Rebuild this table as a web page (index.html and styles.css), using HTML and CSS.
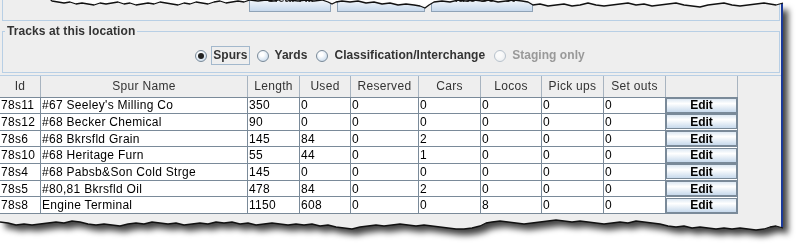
FILE: index.html
```html
<!DOCTYPE html>
<html lang="en">

<head>
    <meta charset="UTF-8">
    <title>Edit Location</title>
    <link rel="stylesheet" href="styles.css">
</head>

<body>
    <div class="shot">
        <div class="paper">
            <div class="frame">
                <div class="toolbar">
                    <button class="jbtn b1">Clear All</button>
                    <button class="jbtn b2">Set All</button>
                    <button class="jbtn b3">Auto Select</button>
                </div>

                <div class="tracks">
                    <div class="tracks-title">Tracks at this location</div>
                    <div class="radios">
                        <label class="opt"><span class="radio on"></span><span class="txt focus">Spurs</span></label>
                        <label class="opt"><span class="radio"></span><span class="txt">Yards</span></label>
                        <label class="opt"><span class="radio"></span><span class="txt">Classification/Interchange</span></label>
                        <label class="opt off"><span class="radio"></span><span class="txt">Staging only</span></label>
                    </div>
                </div>

                <div class="scroll">
                    <table class="grid">
                        <colgroup>
                            <col style="width:41px">
                            <col style="width:207px">
                            <col style="width:52px">
                            <col style="width:51px">
                            <col style="width:68px">
                            <col style="width:62px">
                            <col style="width:61px">
                            <col style="width:62px">
                            <col style="width:62px">
                            <col style="width:72px">
                        </colgroup>
                        <thead>
                            <tr>
                                <th>Id</th>
                                <th>Spur Name</th>
                                <th>Length</th>
                                <th>Used</th>
                                <th>Reserved</th>
                                <th>Cars</th>
                                <th>Locos</th>
                                <th>Pick ups</th>
                                <th>Set outs</th>
                                <th></th>
                            </tr>
                        </thead>
                        <tbody>
                            <tr>
                                <td>78s11</td><td>#67 Seeley's Milling Co</td><td>350</td><td>0</td><td>0</td><td>0</td><td>0</td><td>0</td><td>0</td>
                                <td class="act"><button class="edit">Edit</button></td>
                            </tr>
                            <tr>
                                <td>78s12</td><td>#68 Becker Chemical</td><td>90</td><td>0</td><td>0</td><td>0</td><td>0</td><td>0</td><td>0</td>
                                <td class="act"><button class="edit">Edit</button></td>
                            </tr>
                            <tr>
                                <td>78s6</td><td>#68 Bkrsfld Grain</td><td>145</td><td>84</td><td>0</td><td>2</td><td>0</td><td>0</td><td>0</td>
                                <td class="act"><button class="edit">Edit</button></td>
                            </tr>
                            <tr>
                                <td>78s10</td><td>#68 Heritage Furn</td><td>55</td><td>44</td><td>0</td><td>1</td><td>0</td><td>0</td><td>0</td>
                                <td class="act"><button class="edit">Edit</button></td>
                            </tr>
                            <tr>
                                <td>78s4</td><td>#68 Pabsb&amp;Son Cold Strge</td><td>145</td><td>0</td><td>0</td><td>0</td><td>0</td><td>0</td><td>0</td>
                                <td class="act"><button class="edit">Edit</button></td>
                            </tr>
                            <tr>
                                <td>78s5</td><td>#80,81 Bkrsfld Oil</td><td>478</td><td>84</td><td>0</td><td>2</td><td>0</td><td>0</td><td>0</td>
                                <td class="act"><button class="edit">Edit</button></td>
                            </tr>
                            <tr>
                                <td>78s8</td><td>Engine Terminal</td><td>1150</td><td>608</td><td>0</td><td>0</td><td>8</td><td>0</td><td>0</td>
                                <td class="act"><button class="edit">Edit</button></td>
                            </tr>
                        </tbody>
                    </table>
                </div>
            </div>
        </div>

        <!-- ink line along the torn edges -->
        <svg class="tear" width="800" height="248" viewBox="0 0 800 248">
            <polyline points="46,-10 49,-2 52,1 58,2 64,3 70,2 76,4 82,3 88,4 94,5 100,3 106,4 112,3 118,2 124,4 130,3 136,5 142,4 148,3 154,4 160,2 166,3 172,4 178,5 184,3 190,4 196,2 202,3 208,4 214,2 220,1 226,3 232,2 238,1 244,2 250,0 258,1 266,0 274,1 282,-1 290,0 298,1 306,0 314,1 322,0 328,2 332,4 336,2 342,1 350,2 358,1 366,3 374,2 382,4 390,3 398,5 406,4 414,5 420,6 425,8 429,5 434,2 442,1 450,2 458,0 466,1 474,0 482,1 490,0 498,2 506,1 514,0 522,1 528,2 533,5 540,4 548,6 556,5 564,4 572,6 580,5 588,3 596,5 604,6 612,5 620,4 628,3 636,5 644,4 652,6 660,5 668,4 676,3 684,5 692,6 700,7 708,5 716,4 724,3 732,5 740,6 748,5 756,4 764,3 770,4 776,5 783,3" />
            <polyline points="0,222 8,223 16,225 24,224 32,225 40,224 48,223 56,222 64,223 72,221 80,222 88,224 96,225 104,224 112,225 120,226 128,224 136,223 144,224 152,222 160,223 168,224 176,223 184,225 192,224 200,223 208,224 216,222 224,223 232,222 240,224 248,223 256,225 264,224 272,223 280,224 288,225 296,224 304,225 312,224 320,226 328,225 336,227 344,228 352,229 360,227 368,226 376,225 384,226 392,225 400,224 408,225 416,226 424,225 432,226 440,227 448,228 456,229 464,229 472,228 480,226 486,223 492,222 500,221 508,222 516,223 524,224 532,223 540,222 548,221 556,220 564,221 572,222 580,221 588,222 596,223 604,224 612,223 620,222 628,223 636,221 644,222 652,223 660,224 668,226 676,227 684,226 692,228 700,227 708,228 716,229 724,228 732,229 740,228 748,229 756,230 764,229 770,227 776,226 783,228" />
        </svg>
    </div>
</body>

</html>
```

FILE: styles.css
```css
* {
    box-sizing: border-box;
}

body {
    margin: 0;
    width: 800px;
    height: 248px;
    overflow: hidden;
    background: #fff;
    font-family: "Liberation Sans", Arial, sans-serif;
    font-size: 12px;
}

.shot {
    position: relative;
    width: 800px;
    height: 248px;
}

/* the window piece, cut out with torn top and bottom edges */
.paper {
    width: 800px;
    height: 248px;
    filter: drop-shadow(5px 6px 3px rgba(0, 0, 0, 0.75));
}

.frame {
    width: 783px;
    height: 248px;
    background: #eeeeee;
    border-right: 2px solid #1b3a9a;
    overflow: hidden;
    clip-path: polygon(0 -10px, 46px -10px, 49px -2px, 52px 1px, 58px 2px, 64px 3px, 70px 2px, 76px 4px, 82px 3px, 88px 4px, 94px 5px, 100px 3px, 106px 4px, 112px 3px, 118px 2px, 124px 4px, 130px 3px, 136px 5px, 142px 4px, 148px 3px, 154px 4px, 160px 2px, 166px 3px, 172px 4px, 178px 5px, 184px 3px, 190px 4px, 196px 2px, 202px 3px, 208px 4px, 214px 2px, 220px 1px, 226px 3px, 232px 2px, 238px 1px, 244px 2px, 250px 0, 258px 1px, 266px 0, 274px 1px, 282px -1px, 290px 0, 298px 1px, 306px 0, 314px 1px, 322px 0, 328px 2px, 332px 4px, 336px 2px, 342px 1px, 350px 2px, 358px 1px, 366px 3px, 374px 2px, 382px 4px, 390px 3px, 398px 5px, 406px 4px, 414px 5px, 420px 6px, 425px 8px, 429px 5px, 434px 2px, 442px 1px, 450px 2px, 458px 0, 466px 1px, 474px 0, 482px 1px, 490px 0, 498px 2px, 506px 1px, 514px 0, 522px 1px, 528px 2px, 533px 5px, 540px 4px, 548px 6px, 556px 5px, 564px 4px, 572px 6px, 580px 5px, 588px 3px, 596px 5px, 604px 6px, 612px 5px, 620px 4px, 628px 3px, 636px 5px, 644px 4px, 652px 6px, 660px 5px, 668px 4px, 676px 3px, 684px 5px, 692px 6px, 700px 7px, 708px 5px, 716px 4px, 724px 3px, 732px 5px, 740px 6px, 748px 5px, 756px 4px, 764px 3px, 770px 4px, 776px 5px, 783px 3px,
            783px 228px, 776px 226px, 770px 227px, 764px 229px, 756px 230px, 748px 229px, 740px 228px, 732px 229px, 724px 228px, 716px 229px, 708px 228px, 700px 227px, 692px 228px, 684px 226px, 676px 227px, 668px 226px, 660px 224px, 652px 223px, 644px 222px, 636px 221px, 628px 223px, 620px 222px, 612px 223px, 604px 224px, 596px 223px, 588px 222px, 580px 221px, 572px 222px, 564px 221px, 556px 220px, 548px 221px, 540px 222px, 532px 223px, 524px 224px, 516px 223px, 508px 222px, 500px 221px, 492px 222px, 486px 223px, 480px 226px, 472px 228px, 464px 229px, 456px 229px, 448px 228px, 440px 227px, 432px 226px, 424px 225px, 416px 226px, 408px 225px, 400px 224px, 392px 225px, 384px 226px, 376px 225px, 368px 226px, 360px 227px, 352px 229px, 344px 228px, 336px 227px, 328px 225px, 320px 226px, 312px 224px, 304px 225px, 296px 224px, 288px 225px, 280px 224px, 272px 223px, 264px 224px, 256px 225px, 248px 223px, 240px 224px, 232px 222px, 224px 223px, 216px 222px, 208px 224px, 200px 223px, 192px 224px, 184px 225px, 176px 223px, 168px 224px, 160px 223px, 152px 222px, 144px 224px, 136px 223px, 128px 224px, 120px 226px, 112px 225px, 104px 224px, 96px 225px, 88px 224px, 80px 222px, 72px 221px, 64px 223px, 56px 222px, 48px 223px, 40px 224px, 32px 225px, 24px 224px, 16px 225px, 8px 223px, 0 222px);
}

.tear {
    position: absolute;
    top: 0;
    left: 0;
    pointer-events: none;
}

.tear polyline {
    fill: none;
    stroke: #111;
    stroke-width: 1.3;
    stroke-linejoin: round;
}

/* button strip above the track list, its top torn away */
.toolbar {
    display: flex;
    justify-content: center;
    gap: 6px;
    width: 778px;
    height: 21px;
    margin-left: 2px;
    border: 1px solid #b8cfe5;
    border-top: 0;
}

.jbtn {
    height: 24px;
    margin-top: -12px;
    padding: 0 0 5px;
    border: 1px solid #8fa3b7;
    background: linear-gradient(#dde8f3, #ffffff 35%, #c7d9ec);
    font: bold 12px "Liberation Sans", Arial, sans-serif;
    line-height: 12px;
    color: #333;
}

.b1 {
    width: 82px;
}

.b2 {
    width: 88px;
}

.b3 {
    width: 102px;
}

/* titled border panel */
.tracks {
    width: 778px;
    height: 42px;
    margin: 10px 0 0 2px;
    border: 1px solid #b8cfe5;
}

.tracks-title {
    width: max-content;
    margin: -8px 0 0 2px;
    padding: 0 2px;
    line-height: 14px;
    background: #eeeeee;
    font-weight: bold;
    color: #333;
    letter-spacing: 0.1px;
}

.radios {
    display: flex;
    justify-content: center;
    gap: 7px;
    margin-top: 8px;
}

.opt {
    display: flex;
    align-items: center;
    gap: 4px;
    height: 19px;
    font-weight: bold;
    color: #333;
    letter-spacing: 0.05px;
}

.opt .txt {
    padding: 1px 1px;
    border: 1px solid transparent;
    line-height: 15px;
}

.opt .focus {
    border-color: #a3b8cc;
}

.radio {
    position: relative;
    width: 12px;
    height: 12px;
    border: 1px solid #7a8a99;
    border-radius: 50%;
    background: radial-gradient(circle at 40% 35%, #ffffff 20%, #dde8f3 60%, #b8cfe5);
}

.radio.on::after {
    content: "";
    position: absolute;
    left: 2px;
    top: 2px;
    width: 6px;
    height: 6px;
    border-radius: 50%;
    background: #222;
}

.opt.off {
    color: #999;
}

.opt.off .radio {
    border-color: #b8c2cc;
    background: radial-gradient(circle at 40% 35%, #fafafa 30%, #e6eaee);
}

/* track table */
.scroll {
    margin-top: 2px;
    border-top: 1px solid #b8cfe5;
}

.grid {
    table-layout: fixed;
    width: 739px;
    margin-left: -1px;
    border-collapse: collapse;
    letter-spacing: 0.3px;
}

.grid th {
    height: 21px;
    padding: 0;
    border: 1px solid #a8b4c0;
    border-top: 0;
    border-bottom-color: #7a8a99;
    background: #eeeeee;
    font-weight: normal;
    color: #333;
    text-align: center;
}

.grid tbody tr {
    height: 16.67px;
}

.grid td {
    padding: 0 1px;
    border: 1px solid #7a8a99;
    background: #fff;
    color: #000;
    white-space: nowrap;
    line-height: 14px;
}

.grid td.act {
    padding: 0;
}

.edit {
    display: block;
    width: 100%;
    height: 15px;
    padding: 0;
    border: 1px solid #7a8a99;
    background: linear-gradient(#dde8f3, #ffffff 35%, #c7d9ec);
    font: bold 12px "Liberation Sans", Arial, sans-serif;
    line-height: 12px;
    color: #000;
}
```
